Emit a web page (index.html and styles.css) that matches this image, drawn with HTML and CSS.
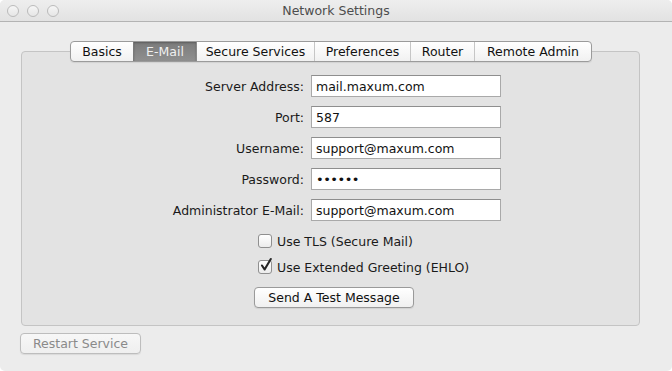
FILE: index.html
```html
<!DOCTYPE html>
<html lang="en">
<head>
    <meta charset="UTF-8">
    <title>Network Settings</title>
    <link rel="stylesheet" href="styles.css">
</head>
<body>
    <div class="window">
        <!-- Title Bar -->
        <header class="titlebar">
            <div class="lights">
                <span class="light"></span>
                <span class="light"></span>
                <span class="light"></span>
            </div>
            <div class="title">Network Settings</div>
        </header>

        <div class="content">
            <!-- Tabs -->
            <nav class="tabs">
                <span class="tab">Basics</span>
                <span class="tab is-active">E-Mail</span>
                <span class="tab">Secure Services</span>
                <span class="tab">Preferences</span>
                <span class="tab">Router</span>
                <span class="tab">Remote Admin</span>
            </nav>

            <!-- E-Mail Panel -->
            <section class="panel">
                <div class="mail-form">
                    <label class="field-label" for="server">Server Address:</label>
                    <input class="field" id="server" type="text" value="mail.maxum.com">

                    <label class="field-label" for="port">Port:</label>
                    <input class="field" id="port" type="text" value="587">

                    <label class="field-label" for="username">Username:</label>
                    <input class="field" id="username" type="text" value="support@maxum.com">

                    <label class="field-label" for="password">Password:</label>
                    <input class="field field-password" id="password" type="text" value="&#8226;&#8226;&#8226;&#8226;&#8226;&#8226;">

                    <label class="field-label" for="admin">Administrator E-Mail:</label>
                    <input class="field" id="admin" type="text" value="support@maxum.com">
                </div>

                <div class="options">
                    <div class="check">
                        <span class="box"></span>
                        <span>Use TLS (Secure Mail)</span>
                    </div>
                    <div class="check">
                        <span class="box">
                            <svg class="tick" width="14" height="16" viewBox="0 0 14 16">
                                <path d="M3 8.5 L5.6 12.5 L11.8 2" fill="none" stroke="#262626" stroke-width="2.1" stroke-linecap="round" stroke-linejoin="round"/>
                            </svg>
                        </span>
                        <span>Use Extended Greeting (EHLO)</span>
                    </div>
                    <button class="btn btn-test" type="button">Send A Test Message</button>
                </div>
            </section>

            <button class="btn btn-disabled" type="button">Restart Service</button>
        </div>
    </div>
</body>
</html>
```

FILE: styles.css
```css
/* General Styling */
body {
    margin: 0;
    background-color: #ffffff;
    font-family: 'DejaVu Sans', sans-serif;
    font-size: 12.5px;
    color: #1a1a1a;
}

.window {
    width: 672px;
    height: 371px;
    background-color: #ececec;
    border-radius: 5px;
    overflow: hidden;
}

/* Title Bar */
.titlebar {
    position: relative;
    height: 21px;
    border-bottom: 1px solid #b3b3b3;
    background: linear-gradient(#eeeeee, #e2e2e2);
    display: flex;
    align-items: center;
    justify-content: center;
}

.lights {
    position: absolute;
    left: 7px;
    top: 5px;
    display: flex;
    gap: 8px;
}

.light {
    width: 10px;
    height: 10px;
    border: 1px solid #bababa;
    border-radius: 50%;
    background: linear-gradient(#f6f6f6, #e6e6e6);
}

.title {
    color: #4d4d4d;
    font-size: 12.5px;
}

/* Content */
.content {
    padding: 19px 0 0 21px;
}

.tabs {
    position: relative;
    z-index: 1;
    display: grid;
    grid-template-columns: 62px 63px 118px 96px 64px 117px;
    width: max-content;
    margin-left: 49px;
    height: 19px;
    border: 1px solid #9b9b9b;
    border-radius: 4px;
    background: linear-gradient(#ffffff, #f1f1f1);
    box-shadow: 0 1px 1px rgba(0, 0, 0, 0.08);
    overflow: hidden;
}

.tab {
    display: flex;
    align-items: center;
    justify-content: center;
    border-left: 1px solid #c6c6c6;
    color: #111111;
}

.tab:first-child {
    border-left: none;
}

.tab.is-active {
    border-left-color: #7a7a7a;
    background: linear-gradient(#7b7b7b, #8f8f8f);
    box-shadow: inset 0 1px 2px rgba(0, 0, 0, 0.25);
    color: #f0f0f0;
}

.tab.is-active + .tab {
    border-left-color: #8a8a8a;
}

/* Panel */
.panel {
    width: 617px;
    height: 273px;
    margin-top: -11px;
    border: 1px solid #c4c4c4;
    border-radius: 4px;
    background-color: #e3e3e3;
}

.mail-form {
    display: grid;
    grid-template-columns: 268px 190px;
    column-gap: 7px;
    row-gap: 9px;
    margin-top: 23px;
    margin-left: 14px;
    align-items: center;
}

.field-label {
    text-align: right;
    color: #1a1a1a;
}

.field {
    box-sizing: border-box;
    width: 190px;
    height: 22px;
    margin: 0;
    padding: 1px 4px 0;
    border: 1px solid #a9a9a9;
    border-top-color: #8e8e8e;
    background-color: #ffffff;
    font-family: 'DejaVu Sans', sans-serif;
    font-size: 12.5px;
    color: #111111;
    outline: none;
}

.field-password {
    font-size: 13px;
    letter-spacing: -0.5px;
}

/* Checkboxes and Buttons */
.options {
    display: flex;
    flex-direction: column;
    align-items: flex-start;
    margin-top: 13px;
    margin-left: 232px;
}

.check {
    display: flex;
    align-items: center;
    gap: 5px;
    height: 14px;
    margin-left: 4px;
    margin-bottom: 12px;
}

.box {
    position: relative;
    box-sizing: border-box;
    width: 14px;
    height: 14px;
    border: 1px solid #8f8f8f;
    border-radius: 3px;
    background: linear-gradient(#ffffff, #ececec);
}

.tick {
    position: absolute;
    left: 0;
    top: -4px;
}

.btn {
    box-sizing: border-box;
    height: 21px;
    padding: 0;
    border: 1px solid #9a9a9a;
    border-radius: 4px;
    background: linear-gradient(#ffffff, #f0f0f0);
    box-shadow: 0 1px 1px rgba(0, 0, 0, 0.08);
    font-family: 'DejaVu Sans', sans-serif;
    font-size: 12.5px;
    color: #111111;
    white-space: nowrap;
}

.btn-test {
    width: 160px;
    margin-top: 1px;
}

.btn-disabled {
    width: 121px;
    margin-top: 7px;
    margin-left: -1px;
    border-color: #bdbdbd;
    background: linear-gradient(#f7f7f7, #efefef);
    color: #8a8a8a;
}
```
